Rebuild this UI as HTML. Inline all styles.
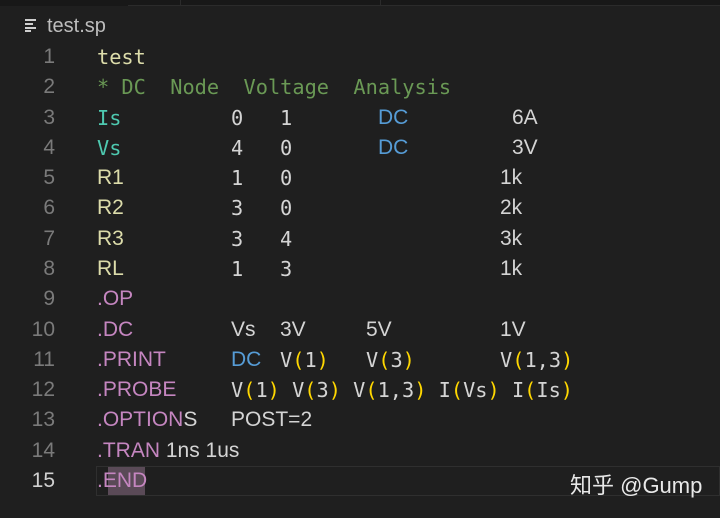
<!DOCTYPE html>
<html><head><meta charset="utf-8"><style>
html,body{margin:0;padding:0;background:#1f1f1f;}
#c{position:relative;width:720px;height:518px;overflow:hidden;background:#1f1f1f;}
.t{position:absolute;white-space:pre;font-size:20px;line-height:30px;}
.m{font-family:"DejaVu Sans Mono","Liberation Mono",monospace;font-size:20.3px;}
.s{font-family:"Liberation Sans",sans-serif;font-size:21px;}
.n{color:#7a7a7a;font-family:"Liberation Sans",sans-serif;font-size:21px;width:40px;text-align:right;left:15px;}
.w{color:#d4d4d4}.y{color:#dcdcaa}.g{color:#6a9955}.c{color:#4ec9b0}.p{color:#c586c0}.b{color:#569cd6}.o{color:#ffd700}
</style></head><body><div id="c">
<div style="position:absolute;left:0;top:0;width:720px;height:6px;background:#181818"></div>
<div style="position:absolute;left:128px;top:5px;width:592px;height:1px;background:#2b2b2b"></div>
<div style="position:absolute;left:180px;top:0;width:1px;height:6px;background:#2b2b2b"></div>
<div style="position:absolute;left:380px;top:0;width:1px;height:6px;background:#2b2b2b"></div>
<svg style="position:absolute;left:24px;top:18px" width="14" height="14"><g stroke="#cfcfcf" stroke-width="2"><line x1="1" y1="2" x2="12" y2="2"/><line x1="1" y1="6" x2="9" y2="6"/><line x1="1" y1="10" x2="12" y2="10"/><line x1="1" y1="13" x2="7" y2="13"/></g></svg>
<div class="t s" style="left:47px;top:11px;color:#bdbdbd;font-size:20px">test.sp</div>

<div style="position:absolute;left:96px;top:466px;width:624px;height:30px;border:1px solid #2f2f2f;box-sizing:border-box"></div>
<div style="position:absolute;left:108px;top:467px;width:37px;height:28px;background:#5a4a57"></div>

<div class="t n" style="top:42px">1</div>
<div class="t n" style="top:72px">2</div>
<div class="t n" style="top:103px">3</div>
<div class="t n" style="top:133px">4</div>
<div class="t n" style="top:163px">5</div>
<div class="t n" style="top:193px">6</div>
<div class="t n" style="top:224px">7</div>
<div class="t n" style="top:254px">8</div>
<div class="t n" style="top:284px">9</div>
<div class="t n" style="top:315px">10</div>
<div class="t n" style="top:345px">11</div>
<div class="t n" style="top:375px">12</div>
<div class="t n" style="top:405px">13</div>
<div class="t n" style="top:436px">14</div>
<div class="t n" style="top:466px;color:#d0d0d0">15</div>

<div class="t m y" style="left:97px;top:42px">test</div>
<div class="t m g" style="left:97px;top:72px">* DC  Node  Voltage  Analysis</div>

<div class="t m c" style="left:97px;top:103px">Is</div>
<div class="t m w" style="left:231px;top:103px">0</div><div class="t m w" style="left:280px;top:103px">1</div>
<div class="t s b" style="left:378px;top:103px">DC</div><div class="t s w" style="left:512px;top:103px">6A</div>

<div class="t m c" style="left:97px;top:133px">Vs</div>
<div class="t m w" style="left:231px;top:133px">4</div><div class="t m w" style="left:280px;top:133px">0</div>
<div class="t s b" style="left:378px;top:133px">DC</div><div class="t s w" style="left:512px;top:133px">3V</div>

<div class="t s y" style="left:97px;top:163px">R1</div>
<div class="t m w" style="left:231px;top:163px">1</div><div class="t m w" style="left:280px;top:163px">0</div><div class="t s w" style="left:500px;top:163px">1k</div>
<div class="t s y" style="left:97px;top:193px">R2</div>
<div class="t m w" style="left:231px;top:193px">3</div><div class="t m w" style="left:280px;top:193px">0</div><div class="t s w" style="left:500px;top:193px">2k</div>
<div class="t s y" style="left:97px;top:224px">R3</div>
<div class="t m w" style="left:231px;top:224px">3</div><div class="t m w" style="left:280px;top:224px">4</div><div class="t s w" style="left:500px;top:224px">3k</div>
<div class="t s y" style="left:97px;top:254px">RL</div>
<div class="t m w" style="left:231px;top:254px">1</div><div class="t m w" style="left:280px;top:254px">3</div><div class="t s w" style="left:500px;top:254px">1k</div>

<div class="t s p" style="left:97px;top:284px">.OP</div>

<div class="t s p" style="left:97px;top:315px">.DC</div>
<div class="t s w" style="left:231px;top:315px">Vs</div><div class="t s w" style="left:280px;top:315px">3V</div><div class="t s w" style="left:366px;top:315px">5V</div><div class="t s w" style="left:500px;top:315px">1V</div>

<div class="t s p" style="left:97px;top:345px">.PRINT</div>
<div class="t s b" style="left:231px;top:345px">DC</div>
<div class="t m w" style="left:280px;top:345px">V<span class="o">(</span>1<span class="o">)</span></div>
<div class="t m w" style="left:366px;top:345px">V<span class="o">(</span>3<span class="o">)</span></div>
<div class="t m w" style="left:500px;top:345px">V<span class="o">(</span>1,3<span class="o">)</span></div>

<div class="t s p" style="left:97px;top:375px">.PROBE</div>
<div class="t m w" style="left:231px;top:375px">V<span class="o">(</span>1<span class="o">)</span> V<span class="o">(</span>3<span class="o">)</span> V<span class="o">(</span>1,3<span class="o">)</span> I<span class="o">(</span>Vs<span class="o">)</span> I<span class="o">(</span>Is<span class="o">)</span></div>

<div class="t s p" style="left:97px;top:405px">.OPTION<span class="w">S</span></div>
<div class="t s w" style="left:231px;top:405px">POST=2</div>

<div class="t s p" style="left:97px;top:436px">.TRAN <span class="w">1ns 1us</span></div>

<div class="t s p" style="left:97px;top:466px">.END</div>

<div class="t" style="left:570px;top:471px;color:#e8e8e8;font-family:'Liberation Sans','Noto Sans CJK SC',sans-serif;font-size:22px">知乎 @Gump</div>
</div></body></html>
